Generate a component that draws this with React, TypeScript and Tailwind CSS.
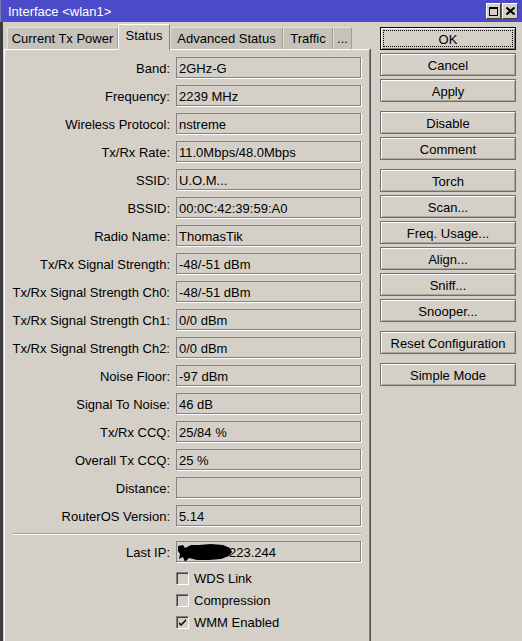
import React from "react";

const rows: [string, string][] = [
  ["Band:", "2GHz-G"],
  ["Frequency:", "2239 MHz"],
  ["Wireless Protocol:", "nstreme"],
  ["Tx/Rx Rate:", "11.0Mbps/48.0Mbps"],
  ["SSID:", "U.O.M..."],
  ["BSSID:", "00:0C:42:39:59:A0"],
  ["Radio Name:", "ThomasTik"],
  ["Tx/Rx Signal Strength:", "-48/-51 dBm"],
  ["Tx/Rx Signal Strength Ch0:", "-48/-51 dBm"],
  ["Tx/Rx Signal Strength Ch1:", "0/0 dBm"],
  ["Tx/Rx Signal Strength Ch2:", "0/0 dBm"],
  ["Noise Floor:", "-97 dBm"],
  ["Signal To Noise:", "46 dB"],
  ["Tx/Rx CCQ:", "25/84 %"],
  ["Overall Tx CCQ:", "25 %"],
  ["Distance:", ""],
  ["RouterOS Version:", "5.14"],
];

const buttons: { label: string; gap?: boolean; focus?: boolean }[] = [
  { label: "OK", focus: true },
  { label: "Cancel" },
  { label: "Apply" },
  { label: "Disable", gap: true },
  { label: "Comment" },
  { label: "Torch", gap: true },
  { label: "Scan..." },
  { label: "Freq. Usage..." },
  { label: "Align..." },
  { label: "Sniff..." },
  { label: "Snooper..." },
  { label: "Reset Configuration", gap: true },
  { label: "Simple Mode", gap: true },
];

function Field({ children }: { children?: React.ReactNode }) {
  return (
    <div className="relative ml-[6px] w-[185px] h-[21px] border border-[#848284] shadow-[1px_1px_0_#ffffff] flex items-center pl-[2px] pt-[2px] whitespace-nowrap overflow-hidden">
      {children}
    </div>
  );
}

function Row({ label, value }: { label: string; value: string }) {
  return (
    <div className="flex items-center h-[21px] mb-[7px]">
      <div className="w-[165px] text-right whitespace-nowrap pt-[2px]">{label}</div>
      <Field>{value}</Field>
    </div>
  );
}

function Check({ label, checked }: { label: string; checked?: boolean }) {
  return (
    <div className="flex items-center h-[22px] pl-[171px]">
      <div className="w-[13px] h-[13px] border-t border-l border-[#808080] border-b-white border-r-white border-b border-r shadow-[inset_1px_1px_0_#404040] bg-[#d4d0c8] flex items-center justify-center">
        {checked && (
          <svg width="9" height="9" viewBox="0 0 9 9">
            <path d="M1 4 L3 6 L8 1 L8 3 L3 8 L1 6 Z" fill="#000" />
          </svg>
        )}
      </div>
      <span className="ml-[5px] whitespace-nowrap">{label}</span>
    </div>
  );
}

function WinButton({ label, focus }: { label: string; focus?: boolean }) {
  if (focus) {
    return (
      <div className="w-[136px] h-[23px] border border-black p-[2px] flex bg-[#d4d0c8] shadow-[inset_1px_1px_0_#ffffff,inset_-1px_-1px_0_#808080]">
        <div className="flex-1 border border-dotted border-black flex items-center justify-center pt-[1px]">
          {label}
        </div>
      </div>
    );
  }
  return (
    <div className="w-[136px] h-[23px] border border-[#6f6f6f] bg-[#d4d0c8] shadow-[inset_1px_1px_0_#ffffff,inset_-1px_-1px_0_#a8a49c] flex items-center justify-center whitespace-nowrap pt-[1px]">
      {label}
    </div>
  );
}

function Tab({ label, w, selected }: { label: string; w: number; selected?: boolean }) {
  if (selected) {
    return (
      <div
        className="relative z-10 h-[26px] -mb-[1px] bg-[#d4d0c8] border-t border-l border-white border-r border-r-[#808080] flex justify-center pt-[3px] whitespace-nowrap"
        style={{ width: w }}
      >
        {label}
      </div>
    );
  }
  return (
    <div
      className="h-[22px] bg-[#c6c2ba] border-t border-l border-[#e4e1dc] border-r border-r-[#a09c94] flex items-center justify-center whitespace-nowrap"
      style={{ width: w }}
    >
      {label}
    </div>
  );
}

export default function App() {
  return (
    <div className="w-[522px] h-[641px] overflow-hidden bg-[#d4d0c8] text-[13px] leading-[15px] text-black flex flex-col font-['Liberation_Sans',Arial,sans-serif]">
      {/* title bar */}
      <div className="h-[22px] shrink-0 bg-[#4b4bc9] border-l border-[#7a7ab0] flex items-center pl-[7px] pr-[4px]">
        <span className="text-white">Interface &lt;wlan1&gt;</span>
        <div className="ml-auto flex gap-[1px]">
          <div className="w-[15px] h-[16px] bg-[#d4d0c8] border-t border-l border-white border-b border-r border-b-[#404040] border-r-[#404040] flex items-center justify-center">
            <div className="w-[9px] h-[9px] border border-black border-t-2" />
          </div>
          <div className="w-[16px] h-[16px] bg-[#d4d0c8] border-t border-l border-white border-b border-r border-b-[#404040] border-r-[#404040] flex items-center justify-center">
            <svg width="9" height="8" viewBox="0 0 9 8">
              <path d="M0.5 0.5 L8.5 7.5 M8.5 0.5 L0.5 7.5" stroke="#000" strokeWidth="2" />
            </svg>
          </div>
        </div>
      </div>

      {/* body */}
      <div className="flex flex-1 min-h-0 border-l-[3px] border-[#3c3c3c]">
        <div className="w-[367px] shrink-0 flex flex-col pl-[1px]">
          <div className="h-[27px] shrink-0 flex items-end pl-[3px]">
            <Tab label="Current Tx Power" w={111} />
            <Tab label="Status" w={52} selected />
            <Tab label="Advanced Status" w={113} />
            <Tab label="Traffic" w={50} />
            <Tab label="..." w={19} />
          </div>
          <div className="flex-1 w-[366px] border-t border-l border-white border-r border-r-[#808080] shadow-[1px_0_0_#505050] pt-[7px]">
            {rows.map(([l, v]) => (
              <Row key={l} label={l} value={v} />
            ))}
            <div className="mt-[2px] ml-[8px] w-[348px] h-[2px] border-t border-[#a09c94] border-b border-b-white" />
            <div className="flex items-center h-[21px] mt-[6px]">
              <div className="w-[165px] text-right whitespace-nowrap pt-[2px]">Last IP:</div>
              <Field>
                <span className="pl-[50px]">223.244</span>
                <svg
                  className="absolute left-0 top-0"
                  width="56"
                  height="21"
                  viewBox="0 0 56 21"
                >
                  <path
                    d="M1 4 L6 3 L8 6 L14 3 L22 3 L34 2 L46 3 L53 6 L55 10 L52 14 L44 17 L32 18 L20 18 L12 16 L8 20 L6 15 L2 17 L3 12 L1 9 Z"
                    fill="#000"
                  />
                </svg>
              </Field>
            </div>
            <div className="mt-[5px]">
              <Check label="WDS Link" />
              <Check label="Compression" />
              <Check label="WMM Enabled" checked />
            </div>
          </div>
        </div>

        <div className="flex-1 flex flex-col pl-[10px] pt-[5px] gap-[3px]">
          {buttons.map((b) => (
            <div key={b.label} className={b.gap ? "mt-[6px]" : ""}>
              <WinButton label={b.label} focus={b.focus} />
            </div>
          ))}
        </div>
      </div>
    </div>
  );
}
